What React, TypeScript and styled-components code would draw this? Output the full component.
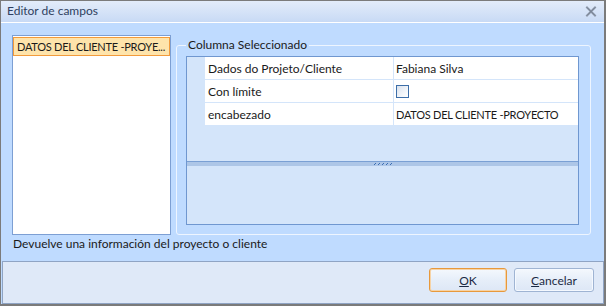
import React from "react";
import styled, { createGlobalStyle } from "styled-components";

const Global = createGlobalStyle`
  html, body { margin: 0; padding: 0; background: #ffffff; }
  * { box-sizing: border-box; }
  body { font-family: Lato, "Noto Sans", sans-serif; font-size: 12px; }
`;

const Window = styled.div`
  width: 606px;
  height: 306px;
  display: flex;
  flex-direction: column;
  border-style: solid;
  border-color: #7b7b7b;
  border-width: 1px 2px 2px 1px;
  background: #bfdbff;
`;

const TitleBar = styled.div`
  height: 22px;
  flex: none;
  display: flex;
  align-items: center;
  justify-content: space-between;
  padding: 0 7px 1px 6px;
  background: linear-gradient(#e3ecfa, #c8daf5);
  border-bottom: 1px solid #ffffff;
  color: #2f3f60;
  line-height: 16px;
`;

const Body = styled.div`
  flex: 1;
  display: flex;
  flex-direction: column;
  padding: 12px 13px 0 11px;
`;

const MainRow = styled.div`
  display: flex;
  gap: 5px;
  height: 200px;
`;

const List = styled.div`
  width: 159px;
  background: #ffffff;
  border: 1px solid #7d9fd3;
  padding: 1px 0 0 0;
`;

const ListItem = styled.div<{ $selected?: boolean }>`
  height: 19px;
  line-height: 17px;
  padding: 0 3px;
  white-space: nowrap;
  overflow: hidden;
  color: #1a1a1a;
  border: 1px solid ${(p) => (p.$selected ? "#f29b3c" : "transparent")};
  background: ${(p) => (p.$selected ? "#fee4ab" : "transparent")};
`;

const Caps = styled.span`
  font-size: 11px;
  letter-spacing: -0.25px;
`;

const Group = styled.fieldset`
  flex: 1;
  margin: 2px 0 0 0;
  padding: 3px 11px 9px 9px;
  border: 1px solid #eef5ff;
  border-radius: 3px;
  min-width: 0;
  display: flex;
  flex-direction: column;
`;

const Legend = styled.legend`
  padding: 0 2px;
  line-height: 16px;
  color: #1a1a1a;
`;

const PropGrid = styled.div`
  flex: 1;
  display: flex;
  flex-direction: column;
  border: 1px solid #6f97d0;
  background: #d4e5fa;
`;

const RowsArea = styled.div`
  height: 104px;
  flex: none;
  display: grid;
  grid-template-columns: 17px 188px 184px;
  grid-auto-rows: 22px;
  column-gap: 1px;
  row-gap: 1px;
  align-content: start;
`;

const Gutter = styled.div``;

const Cell = styled.div<{ $value?: boolean }>`
  background: #ffffff;
  display: flex;
  align-items: center;
  padding-left: ${(p) => (p.$value ? "2px" : "3px")};
  color: #1a1a1a;
  white-space: nowrap;
  overflow: hidden;
`;

const Checkbox = styled.span`
  width: 13px;
  height: 13px;
  border: 1px solid #3d6ea8;
  background: linear-gradient(135deg, #d9e2ee, #f6f8fb 70%, #ffffff);
`;

const Splitter = styled.div`
  height: 5px;
  flex: none;
  border-top: 1px solid #7aa0d4;
  background: #adc6e7;
  display: flex;
  justify-content: center;
  align-items: center;
`;

const HelpArea = styled.div`
  flex: 1;
  background: #d4e5fa;
`;

const Description = styled.div`
  margin-top: 1px;
  padding-left: 1px;
  line-height: 16px;
  color: #1a1a1a;
`;

const Footer = styled.div`
  height: 43px;
  flex: none;
  margin-left: 1px;
  border: 1px solid #8fa4c4;
  background: #dfe9f8;
  display: flex;
  justify-content: flex-end;
  align-items: flex-start;
  gap: 7px;
  padding: 6px 9px 0 0;
`;

const Button = styled.button<{ $default?: boolean; $w: number }>`
  width: ${(p) => p.$w}px;
  height: 24px;
  font: inherit;
  color: #1b2a44;
  border-radius: 3px;
  border: 1px solid ${(p) => (p.$default ? "#e8993c" : "#9fb4d3")};
  background: linear-gradient(#f4f8fd, #e6eef9 50%, #dde7f6);
  box-shadow: inset 0 0 0 1px ${(p) => (p.$default ? "#f6d3a6" : "#f5f9ff")};
  padding: 0;
  u { text-decoration: underline; }
`;

const Grip = () => (
  <svg width="18" height="3" viewBox="0 0 18 3">
    {[0, 4, 8, 12, 16].map((x) => (
      <g key={x}>
        <rect x={x} y={1} width={1} height={1} fill="#3c6fb4" />
        <rect x={x + 1} y={0} width={1} height={1} fill="#3c6fb4" />
      </g>
    ))}
  </svg>
);

const CloseIcon = () => (
  <svg width="12" height="11" viewBox="0 0 12 11">
    <path d="M2 1.5 L10 9.5 M10 1.5 L2 9.5" stroke="#8f9aab" strokeWidth="2" strokeLinecap="square" />
    <path d="M2 1.5 L10 9.5 M10 1.5 L2 9.5" stroke="#6f7a8c" strokeWidth="0.8" />
  </svg>
);

export default function App() {
  return (
    <>
      <Global />
      <Window>
        <TitleBar>
          <span>Editor de campos</span>
          <CloseIcon />
        </TitleBar>
        <Body>
          <MainRow>
            <List>
              <ListItem $selected>
                <Caps>DATOS DEL CLIENTE -PROYE...</Caps>
              </ListItem>
            </List>
            <Group>
              <Legend>Columna Seleccionado</Legend>
              <PropGrid>
                <RowsArea>
                  <Gutter />
                  <Cell>Dados do Projeto/Cliente</Cell>
                  <Cell $value>Fabiana Silva</Cell>
                  <Gutter />
                  <Cell>Con límite</Cell>
                  <Cell $value>
                    <Checkbox />
                  </Cell>
                  <Gutter />
                  <Cell>encabezado</Cell>
                  <Cell $value>
                    <Caps>DATOS DEL CLIENTE -PROYECTO</Caps>
                  </Cell>
                </RowsArea>
                <Splitter>
                  <Grip />
                </Splitter>
                <HelpArea />
              </PropGrid>
            </Group>
          </MainRow>
          <Description>Devuelve una información del proyecto o cliente</Description>
        </Body>
        <Footer>
          <Button $default $w={78}>
            <u>O</u>K
          </Button>
          <Button $w={80}>
            <u>C</u>ancelar
          </Button>
        </Footer>
      </Window>
    </>
  );
}
